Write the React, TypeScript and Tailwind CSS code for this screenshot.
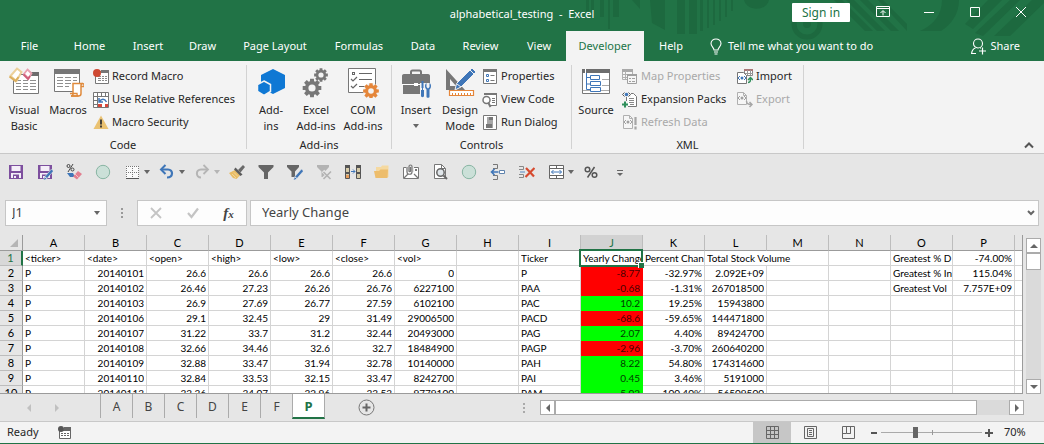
import React from 'react';

type Kids = { children?: React.ReactNode };

function Svg({ w = 16, h = w, children }: Kids & { w?: number; h?: number }) {
  return (
    <svg width={w} height={h} viewBox={`0 0 ${w} ${h}`} fill="none" className="shrink-0" aria-hidden="true">
      {children}
    </svg>
  );
}

const gearPath = (cx: number, cy: number, r: number, tooth: number) => {
  const pts: string[] = [];
  for (let i = 0; i < 8; i++) {
    const a = (i * Math.PI) / 4;
    for (const [off, rad] of [[-0.3, r], [-0.2, tooth], [0.2, tooth], [0.3, r]]) {
      pts.push(`${(cx + Math.cos(a + off) * rad).toFixed(2)} ${(cy + Math.sin(a + off) * rad).toFixed(2)}`);
    }
  }
  return `M${pts.join('L')}Z`;
};

function Gear({ cx, cy, r, color, hole }: { cx: number; cy: number; r: number; color: string; hole: number }) {
  return (
    <>
      <path d={gearPath(cx, cy, r * 0.74, r)} fill={color} />
      <circle cx={cx} cy={cy} r={hole} fill="#f3f3f3" />
    </>
  );
}

/* ---------- Ribbon icons ---------- */

const VisualBasicIcon = () => (
  <Svg w={32}>
    <path d="M5.500 8.500h25v19h-25z" fill="#fff" stroke="#777" />
    <path d="M23 6h8v4h-8z" fill="#6d6d6d" />
    <path d="M8 14.500h5m2 0h5m2 0h6M8 17.500h5m2 0h5m2 0h6M8 20.500h5m2 0h5m2 0h6M8 23.500h5m2 0h5m2 0h6" stroke="#8f8f8f" />
    <path d="M9 2.500l4.500 3.500-5 9-6-5z" fill="#fff" stroke="#ecd09a" strokeWidth="2" />
    <path d="M1.500 10.500l6 4.500 3-4" stroke="#dcae5c" strokeWidth="2" />
    <path d="M19.500 3.500l4 4-3 5-4.500-4.500z" fill="#fff" stroke="#e9a0b0" strokeWidth="1.800" />
    <path d="M15.500 8.500l4.500 4.500 2-3" stroke="#cf5d78" strokeWidth="1.800" />
  </Svg>
);
const MacrosIcon = () => (
  <Svg w={32}>
    <path d="M2.500 4.500h25v21h-25z" fill="#fff" stroke="#777" />
    <path d="M2 3h26v5H2z" fill="#777" />
    <path d="M5 11.500h6m2 0h6m2 0h4M5 14.500h6m2 0h6m2 0h4M5 17.500h6m2 0h6M5 20.500h6m2 0h4" stroke="#8f8f8f" />
    <path d="M21 17.500h10c-1.500 0-2 1-2 2v8c0 1.500-1 2.500-2.500 2.500H19c1.500 0 2-1 2-2z" fill="#fff" stroke="#e08a3c" strokeWidth="1.500" />
    <path d="M29 20.500h3v-1.500c0-1-.5-1.500-1.500-1.500M18 27.500h7c0 1.500 0 2.500 1.500 2.500H19" stroke="#e08a3c" strokeWidth="1.300" />
  </Svg>
);
const RecordIcon = () => (
  <Svg>
    <path d="M2.500 2.500h13v12h-13z" fill="#fff" stroke="#777" />
    <path d="M8 1h8v3H8z" fill="#777" />
    <path d="M5 7.500h3m1 0h2m1 0h2M5 9.500h3m1 0h2m1 0h2M5 11.500h3m1 0h2m1 0h2" stroke="#8a8a8a" />
    <circle cx="4" cy="4" r="4" fill="#cf4a33" />
  </Svg>
);
const RelativeIcon = () => (
  <Svg>
    <path d="M.5.500h15v15H.5z" fill="#fff" stroke="#777" />
    <path d="M4.500 0v16M8.500 0v4M12.500 0v4M0 4.500h16M0 8.500h4M0 12.500h4" stroke="#777" />
    <path d="M5 5h10v10H5z" fill="#fff" />
    <path d="M6 6v4h4M6.500 9.500c2-3 5-3 7 .500" stroke="#3f76b8" strokeWidth="1.500" />
    <path d="M5 12h4v3H5zM12 12h3v3h-3z" fill="#d8483a" />
  </Svg>
);
const SecurityIcon = () => (
  <Svg>
    <path d="M8 .5L15.500 14H.5z" fill="#eac272" />
    <path d="M8 4.500v5M8 10.500v2" stroke="#333" strokeWidth="1.800" />
  </Svg>
);
const AddinsIcon = () => (
  <Svg w={32}>
    <path d="M18 3l12 6v13l-12 6-12-6V9z" fill="#0f78d4" />
    <path d="M9 15l6.500 3.500v7L9 29.500 2.500 25.500v-7z" fill="#0f78d4" stroke="#f3f3f3" strokeWidth="1.500" />
  </Svg>
);
const ExcelAddinsIcon = () => (
  <Svg w={32}>
    <Gear cx={21} cy={9} r={7} color="#777" hole={2.6} />
    <Gear cx={12} cy={22} r={9.5} color="#777" hole={3.6} />
  </Svg>
);
const ComAddinsIcon = () => (
  <Svg w={34} h={32}>
    <path d="M2.500 2.500h27v24h-27z" fill="#fff" stroke="#777" />
    <rect x="6.500" y="6.500" width="2" height="2" stroke="#666" />
    <path d="M13 7.500h13M13 13.500h13M13 20.500h7" stroke="#666" />
    <path d="M5 13l2 2 4-4M5 20l2 2 4-4" stroke="#666" strokeWidth="1.200" />
    <circle cx="25" cy="25" r="8" fill="#f3f3f3" />
    <Gear cx={25} cy={25} r={8} color="#e5863a" hole={2.8} />
  </Svg>
);
const InsertIcon = () => (
  <Svg w={32}>
    <path d="M11 8V6c0-1 .5-1.500 1.500-1.500h7c1 0 1.500.5 1.500 1.500v2" stroke="#777" strokeWidth="2" />
    <path d="M2 10c0-1 .5-2 2-2h24c1.500 0 2 1 2 2v8H2z" fill="#777" />
    <path d="M3 19h26v9H3z" fill="#777" />
    <path d="M2 18.500h12m4 0h12" stroke="#fff" />
    <path d="M14 17h4v3h-4z" fill="#fff" />
    <path d="M20 17h12v15H20z" fill="#f3f3f3" />
    <path d="M21.500 15h2v7h-.5v2h1v6c0 1.500-3 1.500-3 0v-6h1v-2h-.5z" fill="#3f76b8" />
    <path d="M26.500 17v4l1.500 1.500 1.500-1.500v-4c2 1 2 5 0 6.500V31c0 1-3 1-3 0v-7.500c-2-1.500-2-5.500 0-6.500z" fill="#3f76b8" />
  </Svg>
);
const DesignIcon = () => (
  <Svg w={32}>
    <path d="M2 3l19 21H2zM6 13v7h6z" fill="#777" fillRule="evenodd" />
    <path d="M28 2l4 4L17 21l-6 3 1.500-6.500z" fill="#3f76b8" stroke="#f3f3f3" />
    <path d="M26 4l4 4M13 18l4 3" stroke="#f3f3f3" />
    <path d="M5.500 24.500h24v5h-24z" fill="#fff" stroke="#e5863a" strokeWidth="1.200" />
    <path d="M8.500 27v2M11.500 27v2M14.500 27v2M17.500 27v2M20.500 27v2M23.500 27v2M26.500 27v2" stroke="#e5863a" />
  </Svg>
);
const PropertiesIcon = () => (
  <Svg>
    <path d="M1.500.500h13v14h-13z" fill="#fff" stroke="#777" />
    <path d="M1 0h14v3H1z" fill="#777" />
    <path d="M4.500 5.500h2v2h-2zM4.500 10.500h2v2h-2z" stroke="#3f76b8" />
    <path d="M8.500 6.500h4M8.500 11.500h4" stroke="#777" />
  </Svg>
);
const ViewCodeIcon = () => (
  <Svg>
    <path d="M3 1.500h11.500v12H8" fill="#fff" stroke="#777" />
    <path d="M2 1h13v2H2z" fill="#777" />
    <path d="M10 6.500h3M10 8.500h3M10 10.500h3" stroke="#777" />
    <circle cx="4.500" cy="8" r="3.500" fill="#fff" stroke="#777" strokeWidth="1.500" />
    <path d="M6.500 11l2 4" stroke="#777" strokeWidth="2" />
  </Svg>
);
const RunIcon = () => (
  <Svg>
    <path d="M1.500.500h13v14h-13z" fill="#fff" stroke="#777" />
    <path d="M5 2h6v11H5z" fill="#a8a8a8" />
    <path d="M7 2h4v3H7zM4 9h6v4H4z" fill="#777" />
  </Svg>
);
const SourceIcon = () => (
  <Svg w={32}>
    <path d="M2.500 4.500h27v23h-27z" fill="#fff" stroke="#777" />
    <path d="M2 3h28v4H2z" fill="#6d6d6d" />
    <path d="M22 13.500h7M22 19.500h7M3 24.500h26" stroke="#aaa" />
    <path d="M5.500 3v4" stroke="#fff" />
    <path d="M6.500 7v16.500h4M6.500 18h4M6.500 11.500h4" stroke="#3f76b8" />
    <path d="M10.500 9.500h9v4h-9zM10.500 15.500h10v4h-10zM10.500 21.500h10v4h-10z" fill="#fff" stroke="#3f76b8" />
  </Svg>
);
const MapIcon = () => (
  <Svg>
    <path d="M.5 1.500h10v9H.5z" fill="#f6f6f6" stroke="#b0b0b0" />
    <path d="M0 0h11v3H0z" fill="#a9a9a9" />
    <path d="M0 5.500h7M0 8.500h7M3.500 2v9" stroke="#b0b0b0" />
    <path d="M5.500 5.500h9v9h-9z" fill="#f6f6f6" stroke="#a0a0a0" />
    <path d="M5 5h10v2H5z" fill="#a0a0a0" />
    <path d="M7 9h2v1H7zM7 12h2v1H7zM10 9h3v1h-3zM10 12h3v1h-3z" fill="#a0a0a0" />
  </Svg>
);
const ExpansionIcon = () => (
  <Svg>
    <path d="M4.500 1.500h7l3 3v10h-10z" fill="#fff" stroke="#777" />
    <path d="M7 6.500h5M7 8.500h5M7 10.500h5M8 12.500h4" stroke="#888" />
    <path d="M0 0h9v5H0z" fill="#f3f3f3" />
    <path d="M2.500.500l-2 2 2 2M6.500.500l2 2-2 2" stroke="#555" />
    <circle cx="4.500" cy="2.500" r="1.800" fill="#3f76b8" />
    <path d="M-1 9h7v7h-7z" fill="#f3f3f3" />
    <path d="M0 12.500h6M3 9.500v6" stroke="#2f8f5b" strokeWidth="2" />
  </Svg>
);
const RefreshIcon = () => (
  <Svg>
    <path d="M1.500.500h6l3 3v10h-9z" fill="#f6f6f6" stroke="#b0b0b0" />
    <path d="M7.500.500v3h3" stroke="#b0b0b0" />
    <path d="M4 5L2 7l2 2M8 5l2 2-2 2" stroke="#a0a0a0" />
    <circle cx="6" cy="7" r="1.500" fill="#a0a0a0" />
    <path d="M13.500 2v8M13.500 11.500v3" stroke="#a6a6a6" strokeWidth="2.200" />
  </Svg>
);
const ImportIcon = () => (
  <Svg>
    <path d="M7.500.500h8v6h-8z" fill="#fff" stroke="#888" />
    <path d="M7 0h9v2H7z" fill="#a97676" />
    <path d="M10.500 1v5M13.500 1v5M8 4.500h8" stroke="#999" />
    <path d="M.5 3.500h6l3 3v8H.5z" fill="#fff" stroke="#777" />
    <path d="M3 7L1 9l2 2M7 7l2 2-2 2" stroke="#3f76b8" />
    <circle cx="5" cy="9" r="1.500" fill="#3f76b8" />
    <path d="M11 13.500c2.500 0 2.500-1.500 2.500-5M11 11l2.500-2.500L16 11" stroke="#2f8f5b" strokeWidth="1.500" />
  </Svg>
);
const ExportIcon = () => (
  <Svg>
    <path d="M.5.500h6l3 3v9h-9z" fill="#f6f6f6" stroke="#b0b0b0" />
    <path d="M6.500.500v3h3" stroke="#b0b0b0" />
    <path d="M3 4L1 6l2 2M7 4l2 2-2 2" stroke="#a0a0a0" />
    <circle cx="5" cy="6" r="1.500" fill="#a0a0a0" />
    <path d="M9.500 9c0 2.500 1 3.500 5 3.500M12.500 10l2.500 2.500-2.500 2.500" stroke="#a6a6a6" strokeWidth="1.500" />
  </Svg>
);

/* ---------- Ribbon parts ---------- */

function Big({ icon, lines, w, caret }: { icon: React.ReactNode; lines: string[]; w: string; caret?: boolean }) {
  return (
    <button type="button" className={`flex ${w} shrink-0 flex-col items-center pt-px leading-4`}>
      {icon}
      <span className="mt-1 flex flex-col items-center whitespace-nowrap">
        {lines.map((l) => (
          <span key={l}>{l}</span>
        ))}
      </span>
      {caret && <Caret className="mt-1.5" />}
    </button>
  );
}

function Small({ icon, label, disabled }: { icon: React.ReactNode; label: string; disabled?: boolean }) {
  return (
    <button type="button" disabled={disabled} className="flex h-[23px] items-center gap-[3px] whitespace-nowrap px-0.5 disabled:text-[#a9a9a9]">
      {icon}
      {label}
    </button>
  );
}

function Caret({ className = '', light }: { className?: string; light?: boolean }) {
  return (
    <svg width="6" height="4" viewBox="0 0 6 4" className={`shrink-0 ${className}`} aria-hidden="true">
      <path d="M0 0h6L3 4z" fill={light ? '#b5b5b5' : '#666'} />
    </svg>
  );
}

function Group({ label, w, children }: Kids & { label: string; w: string }) {
  return (
    <>
      <section aria-label={label} className={`${w} shrink-0 pt-1`}>
        <div className="flex h-[72px]">{children}</div>
        <div className="text-center leading-4">{label}</div>
      </section>
      <div className="my-1 w-px shrink-0 bg-[#d2d2d2]" />
    </>
  );
}

/* ---------- Quick access toolbar ---------- */

const saveBody = (
  <>
    <path d="M1 1h14v14H1z" fill="#7d4f9e" />
    <path d="M3.500 2h9v5h-9zM3 9h10v5H3z" fill="#f4eef8" />
    <path d="M5 10.500h6V15H5z" fill="#7d4f9e" />
    <path d="M6 12h2v2H6z" fill="#f4eef8" />
  </>
);
const pencil = (
  <>
    <path d="M14.500 5l2 2-7 8-3 1.500 1-3.500z" fill="#3f76b8" stroke="#e6e6e6" strokeWidth=".6" />
    <path d="M8 13l2 1.500" stroke="#e6e6e6" />
  </>
);
const circle = <circle cx="8" cy="8" r="6.700" fill="#cbe0d8" stroke="#88b5a3" />;
const funnel = (c: string) => <path d="M.5 1h15v2L10 8.500V15H6V8.500L.5 3z" fill={c} />;

type Tool = { name: string; art: React.ReactNode; caret?: 'dark' | 'light' };
const tools: Tool[] = [
  { name: 'Save', art: saveBody },
  { name: 'Save As', art: <>{saveBody}{pencil}</> },
  {
    name: 'Clear Formats',
    art: (
      <>
        <circle cx="2.500" cy="2" r="1.500" stroke="#444" />
        <circle cx="6.500" cy="5.500" r="1.500" stroke="#444" />
        <path d="M7 0L2 8" stroke="#444" />
        <path d="M1 9h6l2 4H4z" fill="#3f76b8" />
        <path d="M12 7l4 3-5 5.500-4-3z" fill="#e27f90" />
        <path d="M9 10l3.500 3.500" stroke="#f3c3cb" />
      </>
    ),
  },
  { name: 'Record', art: circle },
  {
    name: 'Borders',
    caret: 'dark',
    art: (
      <>
        <path d="M2 2h13v12H2z" fill="#fafafa" />
        <path d="M2 2.500h13M2 8.500h13M2.500 2v12M8.500 2v12M14.500 2v12" stroke="#777" strokeDasharray="1 1" />
        <path d="M2 14.500h13" stroke="#555" />
      </>
    ),
  },
  {
    name: 'Undo',
    caret: 'dark',
    art: (
      <>
        <path d="M2.500 5.500H9c5.500 0 5.500 8-1 8" stroke="#3f76b8" strokeWidth="2.200" />
        <path d="M6.500 1L2 5.500 6.500 10" stroke="#3f76b8" strokeWidth="2" />
      </>
    ),
  },
  {
    name: 'Redo',
    caret: 'light',
    art: (
      <>
        <path d="M13.500 5.500H7c-5.500 0-5.500 8 0 8" stroke="#b5b5b5" strokeWidth="2" />
        <path d="M9.500 1L14 5.500 9.500 10" stroke="#b5b5b5" strokeWidth="1.800" />
      </>
    ),
  },
  {
    name: 'Format Painter',
    art: (
      <>
        <path d="M0 9l6-3 5 5.500L7.500 15 4 14z" fill="#e9bd66" />
        <path d="M3 10l4 4M5 8.500l4 4" stroke="#f5dca6" strokeWidth=".8" />
        <path d="M6.500 3.500l7 7-2 1.500L5 5.500z" fill="#5c5c5c" />
        <path d="M9 6l5-5 2 2-4.500 5.500z" fill="#6a6a6a" />
      </>
    ),
  },
  { name: 'Filter', art: funnel('#666') },
  {
    name: 'Edit Filter',
    art: (
      <>
        <path d="M0 1h12v2L8 7.500V13H4.500V7.500L0 3z" fill="#666" />
        {pencil}
      </>
    ),
  },
  {
    name: 'Clear Filter',
    art: (
      <>
        <path d="M1 1h12v2L9 7.500V13H5.500V7.500L1 3z" fill="#b3b3b3" />
        <path d="M7 7l8 8M15 7l-8 8" stroke="#e6e6e6" strokeWidth="3.500" />
        <path d="M7.500 8l7 7M15 7.500l-7.500 7.500" stroke="#b3b3b3" strokeWidth="1.600" />
      </>
    ),
  },
  {
    name: 'Text to Columns',
    art: (
      <>
        <path d="M.5 1.500h4v13h-4zM11.500 1.500h4v13h-4z" fill="#d6cba9" stroke="#555" />
        <path d="M0 1h5v3H0zM11 1h5v3h-5zM0 8h5v2H0zM11 8h5v2h-5z" fill="#555" />
        <path d="M1 11h3v3H1z" fill="#e59c5b" />
        <path d="M6 7.500h4M8 5.500l2 2-2 2" stroke="#3f76b8" />
      </>
    ),
  },
  {
    name: 'Open',
    art: (
      <>
        <path d="M2 3h5l1-1.500h6.500V13H2z" fill="#f5d9a0" />
        <path d="M0 7h5l1.500-1.500H14L13.500 14H1.500z" fill="#edbd6c" />
      </>
    ),
  },
  {
    name: 'Attach',
    art: (
      <>
        <path d="M.5 3.500h15v11H.5z" fill="#fff" stroke="#777" />
        <path d="M3 0h8v8H3z" fill="#e6e6e6" />
        <path d="M4 3v5c0 3 5 3 5 0V2.500c0-2-3-2-3 0V7c0 1 1.500 1 1.500 0V3M1 14l4-4M15 14l-4-4" stroke="#777" strokeWidth="1.200" />
        <path d="M12 5h2v2h-2z" fill="#777" />
      </>
    ),
  },
  {
    name: 'Print Preview',
    art: (
      <>
        <path d="M2.500.500h7l4 4v10h-11z" fill="#fff" stroke="#777" />
        <path d="M9.500.500v4h4" stroke="#777" />
        <circle cx="8.500" cy="8.500" r="3.700" fill="#e0e6ea" stroke="#666" strokeWidth="1.500" />
        <path d="M11.500 11.500L15 15" stroke="#666" strokeWidth="2" />
      </>
    ),
  },
  { name: 'Stop', art: circle },
  {
    name: 'Insert Cells',
    art: (
      <>
        <path d="M3 .5h4.500v4H3M3 15.500h4.500v-4H3" stroke="#777" />
        <path d="M9.500 6.500h5v3h-5z" fill="#fff" stroke="#5f83ad" />
        <path d="M1.500 8h7M4.500 5l-3 3 3 3" stroke="#3f76b8" strokeWidth="1.600" />
      </>
    ),
  },
  {
    name: 'Delete Cells',
    art: (
      <>
        <path d="M0 2.500h4.500v3H0M0 13.500h4.500v-3H0" stroke="#888" />
        <path d="M1 7h5v2H1z" fill="#9db8d6" />
        <path d="M7 4l8 8.500M15.500 4L6.500 13" stroke="#d64a2f" strokeWidth="2.200" />
      </>
    ),
  },
  {
    name: 'Merge and Center',
    caret: 'dark',
    art: (
      <>
        <path d="M1.500 1.500h14v13h-14z" fill="#fff" stroke="#666" />
        <path d="M1 4.500h15M1 11.500h15M8.500 1v3M8.500 12v3" stroke="#666" />
        <path d="M3.500 8h10M5.500 6l-2 2 2 2M11.500 6l2 2-2 2" stroke="#3f76b8" />
      </>
    ),
  },
  {
    name: 'Percent Style',
    art: (
      <>
        <circle cx="4.500" cy="5.500" r="2.300" stroke="#555" strokeWidth="1.500" />
        <circle cx="11.500" cy="11" r="2.300" stroke="#555" strokeWidth="1.500" />
        <path d="M11.500 3l-7 10.500" stroke="#555" strokeWidth="1.500" />
      </>
    ),
  },
  {
    name: 'Customize Toolbar',
    art: (
      <>
        <path d="M5 6.500h6" stroke="#666" />
        <path d="M5 9h6l-3 3z" fill="#666" />
      </>
    ),
  },
];

/* ---------- Sheet data ---------- */

const columns = 'ABCDEFGHIJKLMNOP'.split('');
const rows: string[][] = [
  ['<ticker>', '<date>', '<open>', '<high>', '<low>', '<close>', '<vol>', '', 'Ticker', 'Yearly Change', 'Percent Chan', 'Total Stock Volume', '', '', 'Greatest % D', '-74.00%'],
  ['P', '20140101', '26.6', '26.6', '26.6', '26.6', '0', '', 'P', '-8.77', '-32.97%', '2.092E+09', '', '', 'Greatest % In', '115.04%'],
  ['P', '20140102', '26.46', '27.23', '26.26', '26.76', '6227100', '', 'PAA', '-0.68', '-1.31%', '267018500', '', '', 'Greatest Vol', '7.757E+09'],
  ['P', '20140103', '26.9', '27.69', '26.77', '27.59', '6102100', '', 'PAC', '10.2', '19.25%', '15943800', '', '', '', ''],
  ['P', '20140106', '29.1', '32.45', '29', '31.49', '29006500', '', 'PACD', '-68.6', '-59.65%', '144471800', '', '', '', ''],
  ['P', '20140107', '31.22', '33.7', '31.2', '32.44', '20493000', '', 'PAG', '2.07', '4.40%', '89424700', '', '', '', ''],
  ['P', '20140108', '32.66', '34.46', '32.6', '32.7', '18484900', '', 'PAGP', '-2.96', '-3.70%', '260640200', '', '', '', ''],
  ['P', '20140109', '32.88', '33.47', '31.94', '32.78', '10140000', '', 'PAH', '8.22', '54.80%', '174314600', '', '', '', ''],
  ['P', '20140110', '32.84', '33.53', '32.15', '33.47', '8242700', '', 'PAI', '0.45', '3.46%', '5191000', '', '', '', ''],
  ['P', '20140113', '33.36', '34.07', '32.96', '33.53', '9779100', '', 'PAM', '5.02', '100.40%', '56509500', '', '', '', ''],
];

function SheetTable() {
  return (
    <table className="w-full min-w-[1022px] table-fixed border-separate border-spacing-0 font-['Lato','Carlito',sans-serif] text-[10px] leading-[14px] text-black">
      <colgroup>
        <col className="w-[23px]" />
        {columns.map((c) => (
          <col key={c} className="w-[62px]" />
        ))}
        <col />
      </colgroup>
      <thead>
        <tr className="h-4">
          <th className="border-b border-r border-[#9b9b9b] bg-[#e6e6e6] p-0">
            <svg width="8" height="8" viewBox="0 0 8 8" className="ml-auto mr-1" aria-hidden="true">
              <path d="M8 0v8H0z" fill="#b5b5b5" />
            </svg>
          </th>
          {columns.map((c) => (
            <th
              key={c}
              scope="col"
              className={`border-b border-r border-b-[#9b9b9b] border-r-[#bdbdbd] p-0 text-[11px] font-normal ${c === 'J' ? 'bg-[#d2d2d2] text-[#217346]' : 'bg-[#e6e6e6]'}`}
            >
              {c}
            </th>
          ))}
          <th className="border-b border-[#9b9b9b] bg-[#e6e6e6] p-0" />
        </tr>
      </thead>
      <tbody>
        {rows.map((r, i) => (
          <tr key={i} className="h-[15px]">
            <th
              scope="row"
              className={`border-b p-0 text-[11px] font-normal ${i === 0 ? 'border-r-2 border-b-[#bdbdbd] border-r-[#217346] bg-[#d8d8d8] text-[#217346]' : 'border-r border-b-[#bdbdbd] border-r-[#9b9b9b] bg-[#e6e6e6]'}`}
            >
              {i + 1}
            </th>
            {r.map((v, j) => {
              if (i === 0 && j === 12) return null;
              const numeric = /^-?\d/.test(v);
              const filled = j === 9 && i > 0;
              const fill = v.startsWith('-') ? 'border-[#ff0000] bg-[#ff0000] text-[#4a0000]' : 'border-[#00ff00] bg-[#00ff00] text-[#003c00]';
              return (
                <td
                  key={j}
                  colSpan={i === 0 && j === 11 ? 2 : 1}
                  className={`relative border-b border-r py-0 pl-0.5 ${filled ? fill : 'border-[#d4d4d4]'} ${numeric ? 'pr-0.5 text-right' : 'pr-0 text-left'}`}
                >
                  <div className="h-[14px] overflow-hidden whitespace-nowrap">{v}</div>
                  {i === 0 && j === 9 && (
                    <div className="pointer-events-none absolute -bottom-[2px] -left-[2px] -right-px -top-[2px] z-10 border-2 border-[#217346]">
                      <div className="absolute -bottom-[3px] -right-[3px] size-[6px] border-l border-t border-white bg-[#217346]" />
                    </div>
                  )}
                </td>
              );
            })}
            <td className="border-b border-[#d4d4d4] p-0" />
          </tr>
        ))}
      </tbody>
    </table>
  );
}

const scrollBtn = 'flex size-[15px] shrink-0 items-center justify-center border border-[#ababab] bg-white';

function Arrow({ d, light }: { d: string; light?: boolean }) {
  return (
    <Svg w={8}>
      <path d={d} fill={light ? '#c0c0c0' : '#666'} />
    </Svg>
  );
}

const tabs: [string, string][] = [
  ['File', 'w-[59px]'],
  ['Home', 'w-[61px]'],
  ['Insert', 'w-14'],
  ['Draw', 'w-[53px]'],
  ['Page Layout', 'w-[92px]'],
  ['Formulas', 'w-[76px]'],
  ['Data', 'w-[52px]'],
  ['Review', 'w-[63px]'],
  ['View', 'w-[54px]'],
  ['Developer', 'w-[78px]'],
  ['Help', 'w-[54px]'],
];

function TitlePattern() {
  return (
    <svg width="464" height="40" viewBox="0 0 464 40" className="absolute right-0 top-0" aria-hidden="true">
      <g fill="#1d693f">
        <path d="M6 0h3v11H6zM11 0h3v17h-3zM20 0h4v17h-4zM28 0h2v29h-2zM33 0h6v17h-6zM52 0h8v9z" />
        <path d="M70 0h15v30L72 23zM97 0h8v34h-8zM109 0h8v34h-8z" />
        <path d="M120 0h3v31h-3zM127 0h2v28h-2zM133 0h2v25h-2zM139 0h2v21h-2zM145 0h2v17h-2zM151 0h2v11h-2z" />
        <path d="M164 0h25c-2 11-22 12-25 0z" />
        <path d="M254 0h8l31 31h-8zM266 0h8l31 31h-8zM280 0h8l31 31h-8zM298 0h5l24 24v7z" />
        <path d="M362 0h17c0 14-8 25-18 31h-21c14-6 22-17 22-31z" />
        <path d="M408 0h14l-29 29-8-5zM430 0h10l-37 36-8-3zM452 0h12v3l-34 33h-16z" />
      </g>
      <circle cx="227" cy="24" r="13" fill="none" stroke="#1d693f" strokeWidth="5" />
      <circle cx="227" cy="24" r="4" fill="#1d693f" />
    </svg>
  );
}

const winBtn = 'flex h-6 w-[46px] items-center justify-center';

export default function App() {
  return (
    <div className="flex h-screen flex-col overflow-hidden bg-[#e6e6e6] font-['Noto_Sans','Open_Sans',sans-serif] text-[11px] text-[#262626]">
      {/* Title bar and tabs */}
      <header className="relative shrink-0 bg-[#217346] text-white">
        <TitlePattern />
        <div className="relative grid h-[31px] grid-cols-[1fr_auto_1fr] items-start">
          <span />
          <h1 className="whitespace-pre leading-7">alphabetical_testing  -  Excel</h1>
          <div className="flex items-start justify-end">
            <button type="button" className="mr-2.5 mt-[3px] h-[19px] w-[58px] rounded-[1px] bg-white text-xs leading-[19px] text-[#217346]">
              Sign in
            </button>
            <button type="button" aria-label="Ribbon Display Options" className={winBtn}>
              <Svg w={14} h={12}>
                <path d="M.5.500h13v10H.5zM.5 2.500h13" stroke="#fff" />
                <path d="M7 9.500V5M4.500 7L7 4.500 9.500 7" stroke="#fff" />
              </Svg>
            </button>
            <button type="button" aria-label="Minimize" className={winBtn}>
              <Svg w={10}><path d="M0 5.500h10" stroke="#fff" /></Svg>
            </button>
            <button type="button" aria-label="Restore" className={winBtn}>
              <Svg w={10}><path d="M.5.500h9v9h-9z" stroke="#fff" /></Svg>
            </button>
            <button type="button" aria-label="Close" className={winBtn}>
              <Svg w={10}><path d="M0 0l10 10M10 0L0 10" stroke="#fff" /></Svg>
            </button>
          </div>
        </div>
        <nav className="relative flex h-[30px] items-stretch">
          {tabs.map(([name, w]) => (
            <button key={name} type="button" className={`${w} shrink-0 whitespace-nowrap ${name === 'Developer' ? 'bg-[#f3f3f3] text-[#217346]' : ''}`}>
              {name}
            </button>
          ))}
          <button type="button" className="ml-3 flex items-center gap-1.5 whitespace-nowrap">
            <Svg w={12} h={17}>
              <path d="M4 12c0-2.500-3-3.500-3-6.500 0-6 10-6 10 0 0 3-3 4-3 6.500zM4 14h4M4.500 16h3" stroke="#fff" strokeWidth="1.100" />
            </Svg>
            Tell me what you want to do
          </button>
          <button type="button" className="ml-auto mr-6 flex items-center gap-1">
            <Svg w={15} h={17}>
              <circle cx="7" cy="5.500" r="4.500" stroke="#fff" strokeWidth="1.100" />
              <path d="M.5 16c.5-4 2-5.500 4-6M.5 15.500h4.500M9 10h1M11.500 9.500v7M8 13h7" stroke="#fff" strokeWidth="1.200" />
            </Svg>
            Share
          </button>
        </nav>
      </header>

      {/* Ribbon */}
      <div className="flex shrink-0 border-b border-[#c8c8c8] bg-[#f3f3f3]">
        <Group label="Code" w="w-[246px]">
          <Big icon={<VisualBasicIcon />} lines={['Visual', 'Basic']} w="w-12" />
          <Big icon={<MacrosIcon />} lines={['Macros']} w="w-10" />
          <div className="ml-[3px] flex flex-col">
            <Small icon={<RecordIcon />} label="Record Macro" />
            <Small icon={<RelativeIcon />} label="Use Relative References" />
            <Small icon={<SecurityIcon />} label="Macro Security" />
          </div>
        </Group>
        <Group label="Add-ins" w="w-36">
          <Big icon={<AddinsIcon />} lines={['Add-', 'ins']} w="w-12" />
          <Big icon={<ExcelAddinsIcon />} lines={['Excel', 'Add-ins']} w="w-[42px]" />
          <Big icon={<ComAddinsIcon />} lines={['COM', 'Add-ins']} w="w-[52px]" />
        </Group>
        <Group label="Controls" w="w-[179px]">
          <Big icon={<InsertIcon />} lines={['Insert']} w="w-12" caret />
          <Big icon={<DesignIcon />} lines={['Design', 'Mode']} w="w-10" />
          <div className="flex flex-col">
            <Small icon={<PropertiesIcon />} label="Properties" />
            <Small icon={<ViewCodeIcon />} label="View Code" />
            <Small icon={<RunIcon />} label="Run Dialog" />
          </div>
        </Group>
        <Group label="XML" w="w-[231px]">
          <Big icon={<SourceIcon />} lines={['Source']} w="w-12" />
          <div className="flex w-[115px] flex-col">
            <Small icon={<MapIcon />} label="Map Properties" disabled />
            <Small icon={<ExpansionIcon />} label="Expansion Packs" />
            <Small icon={<RefreshIcon />} label="Refresh Data" disabled />
          </div>
          <div className="flex flex-col">
            <Small icon={<ImportIcon />} label="Import" />
            <Small icon={<ExportIcon />} label="Export" disabled />
          </div>
        </Group>
        <button type="button" aria-label="Collapse the Ribbon" className="mb-1 ml-auto mr-2.5 self-end">
          <Svg w={10} h={8}><path d="M1 6.500l4-4 4 4" stroke="#555" strokeWidth="2" /></Svg>
        </button>
      </div>

      {/* Quick access toolbar */}
      <div role="toolbar" aria-label="Quick Access" className="flex h-9 shrink-0 items-center pl-px">
        {tools.map((t) => (
          <button key={t.name} type="button" aria-label={t.name} className={`flex shrink-0 items-center ${t.caret ? 'w-[35px]' : 'w-[29px]'}`}>
            <span className="flex w-[29px] shrink-0 justify-center"><Svg>{t.art}</Svg></span>
            {t.caret && <Caret className="-ml-0.5" light={t.caret === 'light'} />}
          </button>
        ))}
      </div>

      {/* Formula bar */}
      <div className="mb-[9px] mt-2.5 flex h-[26px] shrink-0 items-stretch pl-[5px] pr-[5px] text-[13px] text-[#444]">
        <div className="flex w-[102px] shrink-0 items-center border border-[#c6c6c6] bg-[#fdfdfd] pl-1.5 pr-1.5">
          <input aria-label="Name Box" defaultValue="J1" className="w-0 min-w-0 flex-1 bg-transparent text-[13px] outline-none" />
          <Caret />
        </div>
        <div className="flex w-[30px] shrink-0 flex-col items-center justify-center gap-0.5">
          <i className="size-0.5 bg-[#999]" />
          <i className="size-0.5 bg-[#999]" />
          <i className="size-0.5 bg-[#999]" />
        </div>
        <div className="flex w-[110px] shrink-0 items-center justify-around border border-[#c6c6c6] bg-[#fdfdfd]">
          <button type="button" aria-label="Cancel">
            <Svg w={12}><path d="M1 1l10 10M11 1L1 11" stroke="#c4c4c4" strokeWidth="1.800" /></Svg>
          </button>
          <button type="button" aria-label="Enter">
            <Svg w={12}><path d="M1 6l3.500 4L11 1.500" stroke="#c4c4c4" strokeWidth="2.200" /></Svg>
          </button>
          <button type="button" className="font-['Liberation_Serif',serif] text-[15px] font-bold italic leading-5">
            f<span className="text-[11px]">x</span>
          </button>
        </div>
        <div className="ml-[3px] flex flex-1 items-center border border-[#c6c6c6] bg-[#fdfdfd] pl-[11px] pr-[3px]">
          <input aria-label="Formula Bar" defaultValue="Yearly Change" className="min-w-0 flex-1 bg-transparent outline-none" />
          <button type="button" aria-label="Expand Formula Bar">
            <Svg w={8}><path d="M1 2l3 3 3-3" stroke="#666" strokeWidth="2" /></Svg>
          </button>
        </div>
      </div>

      {/* Sheet */}
      <main className="flex min-h-0 flex-1">
        <div className="min-w-0 flex-1 overflow-hidden border-b border-r border-[#9b9b9b] bg-white">
          <SheetTable />
        </div>
        <div className="ml-[3px] mr-[3px] mt-[3px] flex w-[15px] flex-col bg-[#dadada]">
          <button type="button" aria-label="Scroll up" className={scrollBtn}><Arrow d="M4 2l4 4H0z" /></button>
          <div className="h-[17px] border border-[#ababab] bg-white" />
          <button type="button" aria-label="Scroll down" className={`${scrollBtn} mt-auto`}><Arrow d="M0 2h8L4 6z" /></button>
        </div>
      </main>

      {/* Sheet tabs and horizontal scroll */}
      <div className="flex h-[27px] shrink-0 items-start pr-5">
        <div className="flex h-6 w-[100px] shrink-0 items-center gap-5 pl-[25px] pt-1">
          <Arrow d="M6 0v8L2 4z" light />
          <Arrow d="M2 0v8l4-4z" light />
        </div>
        {['A', 'B', 'C', 'D', 'E', 'F'].map((s) => (
          <button key={s} type="button" className="h-6 w-8 shrink-0 border-l border-[#ababab] pt-0.5 text-xs text-[#444]">
            {s}
          </button>
        ))}
        <button type="button" className="h-[25px] w-[33px] shrink-0 border-x border-b-2 border-x-[#ababab] border-b-[#217346] bg-white pt-0.5 text-[13px] font-bold text-[#217346]">
          P
        </button>
        <button type="button" aria-label="New sheet" className="ml-[33px] mt-[5px]">
          <Svg w={17}>
            <circle cx="8.500" cy="8.500" r="7.500" stroke="#777" />
            <path d="M4.500 8.500h8M8.500 4.500v8" stroke="#666" strokeWidth="2" />
          </Svg>
        </button>
        <div className="ml-auto flex w-[35%] min-w-0 shrink-0 items-center pt-1.5 sm:w-[501px]">
          <div className="mr-[15px] flex flex-col gap-0.5">
            <i className="size-0.5 bg-[#aaa]" />
            <i className="size-0.5 bg-[#aaa]" />
            <i className="size-0.5 bg-[#aaa]" />
          </div>
          <button type="button" aria-label="Scroll left" className={scrollBtn}><Arrow d="M6 0v8L2 4z" /></button>
          <div className="flex h-[15px] min-w-0 flex-1 bg-[#dadada]">
            <div className="w-[93%] border border-[#ababab] bg-white" />
          </div>
          <button type="button" aria-label="Scroll right" className={scrollBtn}><Arrow d="M2 0v8l4-4z" /></button>
        </div>
      </div>

      {/* Status bar */}
      <footer className="flex h-[23px] shrink-0 items-stretch border-b border-t border-b-[#217346] border-t-[#c8c8c8] bg-[#f3f3f3]">
        <span className="flex w-[58px] items-center pl-[7px]">Ready</span>
        <button type="button" aria-label="Record macro">
          <Svg w={14} h={13}>
            <path d="M1.500 4.500h11v8h-11z" fill="#fff" stroke="#666" />
            <path d="M6 1h7v4H6z" fill="#666" />
            <path d="M3 7.500h2m1 0h2m1 0h2M3 9.500h2m1 0h2m1 0h2" stroke="#666" />
            <circle cx="3" cy="3" r="3" fill="#555" />
          </Svg>
        </button>
        <div className="ml-auto flex items-stretch">
          <button type="button" aria-label="Normal view" className="flex w-[38px] items-center justify-center bg-[#c6c6c6]">
            <Svg w={13}><path d="M.5.500h12v12H.5zM.5 4.500h12M.5 8.500h12M4.500.500v12M8.500.500v12" stroke="#666" /></Svg>
          </button>
          <button type="button" aria-label="Page layout view" className="flex w-[38px] items-center justify-center">
            <Svg w={13}>
              <path d="M.5.500h12v12H.5zM3.500 2.500v8h6v-8z" stroke="#666" />
              <path d="M5 4.500h3M5 6.500h3M5 8.500h3" stroke="#666" />
            </Svg>
          </button>
          <button type="button" aria-label="Page break view" className="flex w-[38px] items-center justify-center">
            <Svg w={13}><path d="M.5.500h12v12H.5zM4.500.500v7h4v-7M.5 7.500h4M8.500 7.500v-7" stroke="#666" /></Svg>
          </button>
          <button type="button" aria-label="Zoom out" className="ml-1 flex items-center">
            <Svg w={6}><path d="M0 3h6" stroke="#555" strokeWidth="2" /></Svg>
          </button>
          <div className="relative ml-1 flex items-center">
            <input
              type="range"
              aria-label="Zoom"
              min={0}
              max={100}
              defaultValue={33}
              className="h-[11px] w-[101px] appearance-none bg-[linear-gradient(#aaa,#aaa)] bg-[length:100%_1px] bg-center bg-no-repeat [&::-webkit-slider-thumb]:h-[11px] [&::-webkit-slider-thumb]:w-[5px] [&::-webkit-slider-thumb]:appearance-none [&::-webkit-slider-thumb]:bg-[#666]"
            />
            <i className="pointer-events-none absolute left-1/2 h-[5px] w-px bg-[#999]" />
          </div>
          <button type="button" aria-label="Zoom in" className="ml-[3px] flex items-center">
            <Svg w={8}><path d="M0 4h8M4 0v8" stroke="#555" strokeWidth="2" /></Svg>
          </button>
          <span className="flex w-[51px] items-center pl-[11px]">70%</span>
        </div>
      </footer>
    </div>
  );
}
